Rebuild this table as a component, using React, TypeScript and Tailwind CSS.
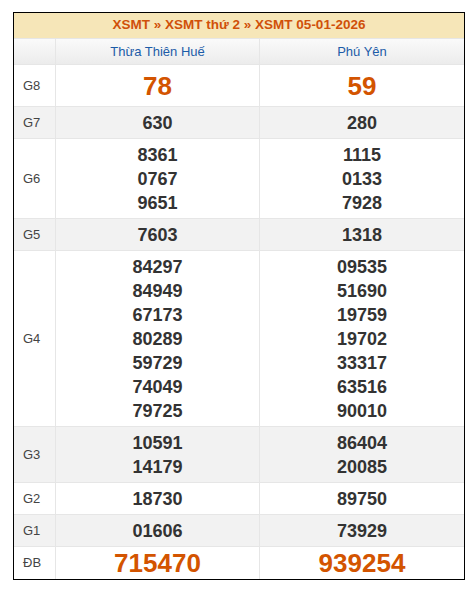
import React from 'react';

const rows = [
  { label: 'G8', a: ['78'], b: ['59'], big: true, gray: false },
  { label: 'G7', a: ['630'], b: ['280'], gray: true },
  { label: 'G6', a: ['8361', '0767', '9651'], b: ['1115', '0133', '7928'], gray: false },
  { label: 'G5', a: ['7603'], b: ['1318'], gray: true },
  { label: 'G4', a: ['84297', '84949', '67173', '80289', '59729', '74049', '79725'], b: ['09535', '51690', '19759', '19702', '33317', '63516', '90010'], gray: false },
  { label: 'G3', a: ['10591', '14179'], b: ['86404', '20085'], gray: true },
  { label: 'G2', a: ['18730'], b: ['89750'], gray: false },
  { label: 'G1', a: ['01606'], b: ['73929'], gray: true },
  { label: 'ĐB', a: ['715470'], b: ['939254'], big: true, gray: false, last: true },
];

const Cell = ({ nums, big, last }: { nums: string[]; big?: boolean; last?: boolean }) => (
  <div className={`flex flex-col items-center justify-center border-l border-[#e6e6e6] ${last ? 'py-[2px]' : 'pt-[4px] pb-[3px]'}`}>
    {nums.map(n => (
      <span
        key={n}
        className={big ? `text-[26px] font-bold text-[#d35400] ${last ? 'leading-[28px]' : 'leading-[34px]'}` : 'text-[18px] font-bold text-[#333] leading-[24px]'}
      >
        {n}
      </span>
    ))}
  </div>
);

export default function App() {
  return (
    <div className="min-h-[591px] bg-white pt-[12px] pl-[13px]" style={{ fontFamily: '"Liberation Sans", Arial, sans-serif' }}>
      <div className="w-[452px] border border-black">
        <div className="h-[25px] flex items-center justify-center bg-[#f6e6b8] text-[13.5px] font-bold text-[#d0500a]">
          XSMT » XSMT thứ 2 » XSMT 05-01-2026
        </div>
        <div className="grid grid-cols-[41px_204px_1fr] h-[26px] bg-gradient-to-b from-[#fafafa] to-[#ececec] border-t border-[#e6e6e6] text-[13px] text-[#1c5ca8]">
          <div />
          <div className="flex items-center justify-center border-l border-[#e6e6e6]">Thừa Thiên Huế</div>
          <div className="flex items-center justify-center border-l border-[#e6e6e6]">Phú Yên</div>
        </div>
        {rows.map(r => (
          <div
            key={r.label}
            className={`grid grid-cols-[41px_204px_1fr] border-t border-[#e6e6e6] ${r.gray ? 'bg-[#f2f2f2]' : 'bg-white'}`}
          >
            <div className="flex items-center pl-[9px] text-[13px] text-[#444]">{r.label}</div>
            <Cell nums={r.a} big={r.big} last={r.last} />
            <Cell nums={r.b} big={r.big} last={r.last} />
          </div>
        ))}
      </div>
    </div>
  );
}
